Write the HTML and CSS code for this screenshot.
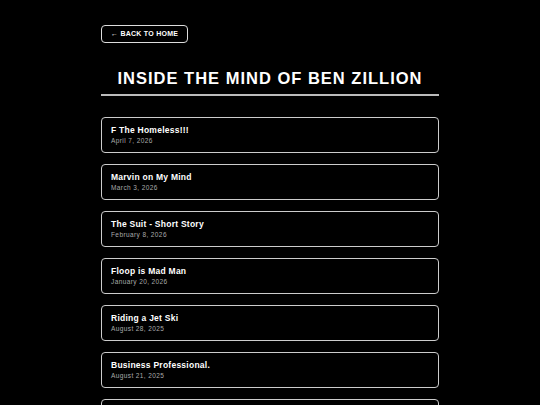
FILE: index.html
```html
<!DOCTYPE html>
<html>
<head>
<meta charset="utf-8">
<link rel="stylesheet" href="styles.css">
</head>
<body>
<main class="page">
  <a class="back" href="#">← BACK TO HOME</a>
  <h1 class="title">INSIDE THE MIND OF BEN ZILLION</h1>
  <ul class="posts">
    <li class="post"><div class="post-title">F The Homeless!!!</div><div class="post-date">April 7, 2026</div></li>
    <li class="post"><div class="post-title">Marvin on My Mind</div><div class="post-date">March 3, 2026</div></li>
    <li class="post"><div class="post-title">The Suit - Short Story</div><div class="post-date">February 8, 2026</div></li>
    <li class="post"><div class="post-title">Floop is Mad Man</div><div class="post-date">January 20, 2026</div></li>
    <li class="post"><div class="post-title">Riding a Jet Ski</div><div class="post-date">August 28, 2025</div></li>
    <li class="post"><div class="post-title">Business Professional.</div><div class="post-date">August 21, 2025</div></li>
    <li class="post"></li>
  </ul>
</main>
</body>
</html>
```
FILE: styles.css
```css
html, body {
  margin: 0;
  padding: 0;
  background: #000;
  color: #fff;
  font-family: "Liberation Sans", Arial, sans-serif;
}
.page {
  width: 338px;
  margin: 0 auto;
  padding-top: 25px;
}
.back {
  display: block;
  width: max-content;
  box-sizing: border-box;
  height: 18px;
  line-height: 16px;
  padding: 0 9px;
  border: 1px solid #ddd;
  border-radius: 4px;
  color: #fff;
  text-decoration: none;
  font-size: 7px;
  font-weight: bold;
  letter-spacing: 0.25px;
}
.title {
  margin: 24px 0 0;
  padding-bottom: 5px;
  border-bottom: 2px solid #bbb;
  text-align: center;
  font-size: 16.5px;
  line-height: 22px;
  letter-spacing: 1px;
  font-weight: bold;
}
.posts {
  list-style: none;
  margin: 21px 0 0;
  padding: 0;
  display: flex;
  flex-direction: column;
  gap: 11px;
}
.post {
  box-sizing: border-box;
  height: 36px;
  border: 1px solid #ccc;
  border-radius: 4px;
  padding: 7px 9px 0;
}
.post-title {
  font-size: 8.5px;
  font-weight: bold;
  letter-spacing: 0.25px;
  line-height: 11px;
}
.post-date {
  font-size: 6.5px;
  color: #aaa;
  letter-spacing: 0.4px;
  line-height: 9px;
}
```
